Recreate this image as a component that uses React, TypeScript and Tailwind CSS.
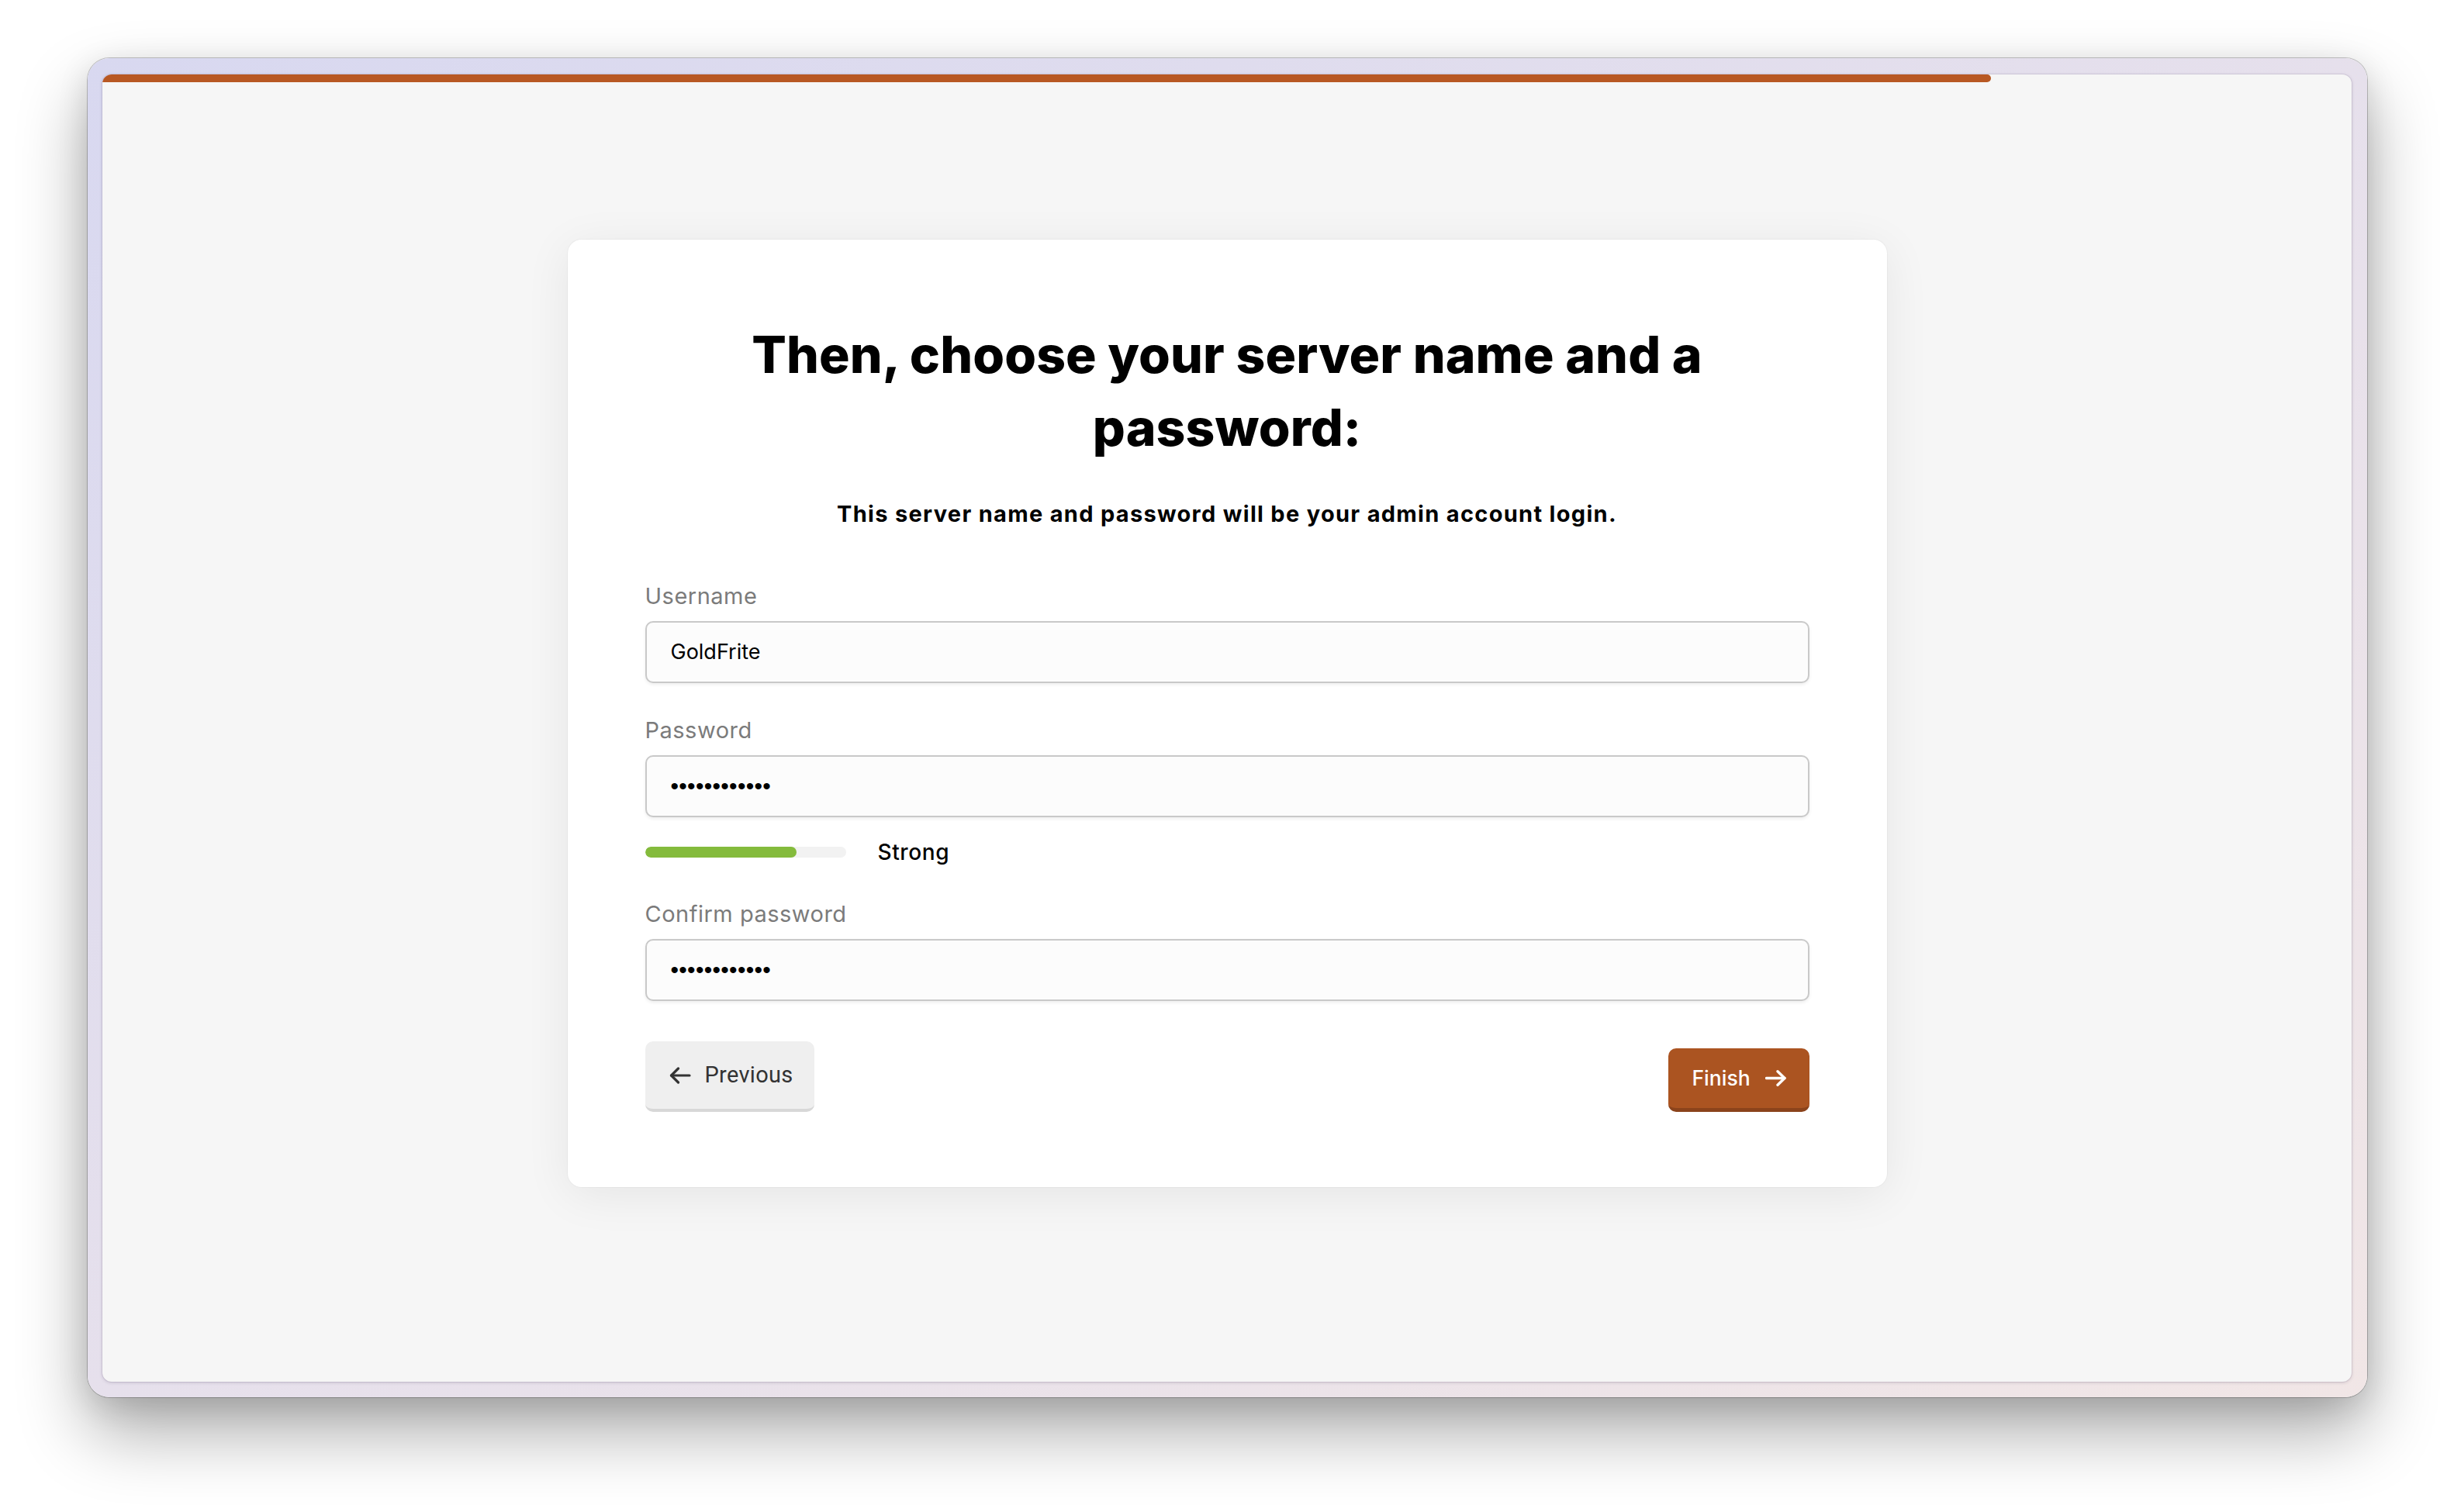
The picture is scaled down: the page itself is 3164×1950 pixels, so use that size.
import React from "react";

function ArrowLeftIcon() {
  return (
    <svg width="28" height="22" viewBox="0 0 28 22" fill="none" stroke="#333333" strokeWidth="3.2" strokeLinecap="round" strokeLinejoin="round">
      <path d="M26 11H2.5" />
      <path d="M11.5 2L2.5 11L11.5 20" />
    </svg>
  );
}

function ArrowRightIcon() {
  return (
    <svg width="27" height="21" viewBox="0 0 27 21" fill="none" stroke="#ffffff" strokeWidth="3.4" strokeLinecap="round" strokeLinejoin="round">
      <path d="M1.5 10.5H25" />
      <path d="M16 1.8L25 10.5L16 19.2" />
    </svg>
  );
}

function Field({ label, children, className = "" }: { label: string; children: React.ReactNode; className?: string }) {
  return (
    <div className={"flex flex-col " + className}>
      <label className="h-[40px] text-[29px] leading-[40px] tracking-[0.5px] text-[#7b7b7b] font-normal">{label}</label>
      <div className="mt-[12px] flex h-[80px] items-center rounded-[10px] border-2 border-[#c9c9c9] bg-[#fcfcfc] pl-[31px] shadow-[0_2px_4px_rgba(0,0,0,0.07)]">
        {children}
      </div>
    </div>
  );
}

function Dots() {
  return (
    <span className="text-[30px] leading-none tracking-[0.3px] text-black" style={{ fontFamily: '"Liberation Sans", Arial, sans-serif' }}>
      ••••••••••••
    </span>
  );
}

export default function App() {
  return (
    <div className="h-[1950px] w-[3164px] bg-white pl-[113px] pt-[75px]" style={{ fontFamily: 'Inter, "Noto Sans", sans-serif' }}>
      <div className="h-[1727px] w-[2939px] rounded-[28px] bg-linear-to-br from-[#d8d8f0] via-[#e6e0ec] to-[#f1e6e6] pb-[20px] pl-[19px] pr-[20px] pt-[21px] shadow-[0_0_0_1px_rgba(0,0,0,0.22),0_45px_90px_rgba(0,0,0,0.33),0_10px_40px_rgba(0,0,0,0.12)]">
        <div className="flex h-full flex-col overflow-hidden rounded-[12px] bg-[#f6f6f6] shadow-[0_0_0_1px_rgba(60,40,90,0.08),0_1px_4px_rgba(40,20,60,0.18)]">
          <div className="h-[10px] w-[2435px] shrink-0 rounded-r-full bg-[#b85823]" />
          <div className="flex justify-center pt-[203px]">
            <div className="flex w-[1701px] flex-col rounded-[18px] bg-white px-[100px] pb-[97px] pt-[101px] shadow-[0_10px_60px_rgba(0,0,0,0.07),0_0_0_1px_rgba(0,0,0,0.03)]">
              <h1 className="text-center text-[66px] font-extrabold leading-[94px] tracking-[0.1px] text-black">
                Then, choose your server name and a
                <br />
                password:
              </h1>
              <p className="mt-[45px] text-center text-[29px] font-bold leading-[40px] tracking-[1.3px] text-black">
                This server name and password will be your admin account login.
              </p>

              <Field label="Username" className="mt-[66px]">
                <span className="text-[27px] text-black">GoldFrite</span>
              </Field>

              <Field label="Password" className="mt-[41px]">
                <Dots />
              </Field>

              <div className="mt-[25px] flex h-[40px] items-center">
                <div className="h-[14px] w-[259px] overflow-hidden rounded-full bg-[#f2f2f2]">
                  <div className="h-full w-[195px] rounded-full bg-[#84bb3c]" />
                </div>
                <span className="ml-[41px] text-[28px] font-medium leading-[40px] tracking-[0.6px] text-black">Strong</span>
              </div>

              <Field label="Confirm password" className="mt-[40px]">
                <Dots />
              </Field>

              <div className="mt-[52px] flex items-end justify-between">
                <button className="flex h-[91px] w-[218px] items-center gap-[18px] rounded-[10px] border-b-4 border-[#d8d8d8] bg-[#efefef] pl-[31px]" style={{ fontFamily: 'Roboto, sans-serif' }}>
                  <ArrowLeftIcon />
                  <span className="text-[29px] tracking-[0.3px] text-[#333333]">Previous</span>
                </button>
                <button className="flex h-[82px] w-[182px] items-center gap-[19px] rounded-[10px] border-b-[5px] border-[#8b431b] bg-[#ab5421] pl-[31px]">
                  <span className="text-[26.5px] font-medium text-white">Finish</span>
                  <ArrowRightIcon />
                </button>
              </div>
            </div>
          </div>
        </div>
      </div>
    </div>
  );
}
